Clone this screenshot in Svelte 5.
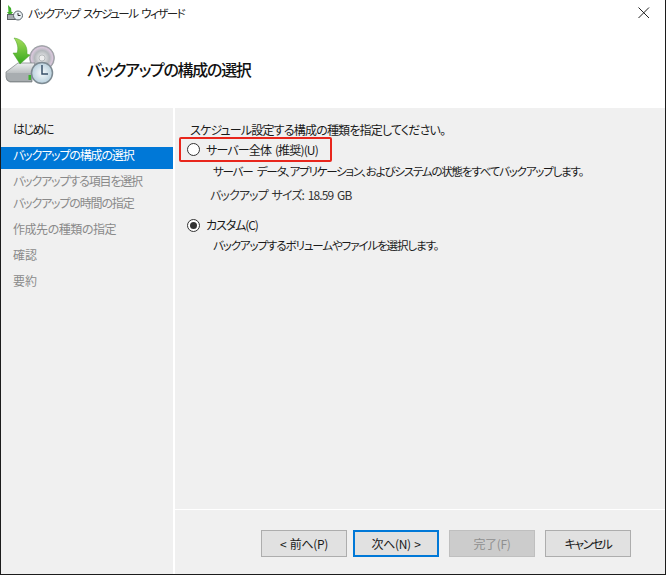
<script lang="ts">
  const steps = [
    { label: "はじめに", state: "done", track: "t-kana" },
    { label: "バックアップの構成の選択", state: "active", track: "t-mid" },
    { label: "バックアップする項目を選択", state: "todo", tight: true, track: "t-mid" },
    { label: "バックアップの時間の指定", state: "todo", track: "t-mid" },
    { label: "作成先の種類の指定", state: "todo", track: "t-low" },
    { label: "確認", state: "todo", track: "" },
    { label: "要約", state: "todo", track: "" }
  ];
</script>

<div class="window">
  <div class="titlebar">
    <svg class="small-icon" width="18" height="16" viewBox="0 0 18 16">
      <path d="M2 0 L5 3 L5.5 7 L7 7 L4 11 L1 7 L2.5 7 Z" fill="#3fae2a" />
      <rect x="1.5" y="9.5" width="8" height="5" fill="#a5abaf" stroke="#5b6165" stroke-width="1" />
      <circle cx="12" cy="10.5" r="4.5" fill="#e8eff3" stroke="#59636a" />
      <path d="M12 8 V10.5 H14.5" fill="none" stroke="#333" />
    </svg>
    <span class="title">バックアップ スケジュール ウィザード</span>
    <svg class="close" width="14" height="14" viewBox="0 0 14 14">
      <path d="M1.5 1.5 L12 12 M12 1.5 L1.5 12" stroke="#222" stroke-width="1" fill="none" />
    </svg>
  </div>

  <div class="header">
    <svg class="big-icon" width="56" height="50" viewBox="0 0 56 50">
      <defs>
        <linearGradient id="arrow" x1="0" y1="0" x2="0" y2="1">
          <stop offset="0" stop-color="#a5dc5a" />
          <stop offset="1" stop-color="#35a81e" />
        </linearGradient>
        <linearGradient id="drive" x1="0" y1="0" x2="0" y2="1">
          <stop offset="0" stop-color="#eef0f1" />
          <stop offset="1" stop-color="#8d9396" />
        </linearGradient>
        <radialGradient id="disc">
          <stop offset="0" stop-color="#f4f4f4" />
          <stop offset="0.6" stop-color="#b4b8bc" />
          <stop offset="0.85" stop-color="#d9c8dc" />
          <stop offset="1" stop-color="#8f9498" />
        </radialGradient>
        <radialGradient id="face">
          <stop offset="0" stop-color="#f6fafc" />
          <stop offset="1" stop-color="#b9d0dd" />
        </radialGradient>
      </defs>
      <circle cx="37" cy="23" r="12.5" fill="url(#disc)" stroke="#8b9094" stroke-width="0.5" />
      <circle cx="37" cy="23" r="3" fill="#eee" stroke="#8b9094" stroke-width="0.5" />
      <path d="M1 37 L13 28 L30 28 L27 38 L27 47 L5 47 Q1 46 1 42 Z" fill="url(#drive)" stroke="#777c80" stroke-width="0.7" />
      <path d="M2 38 L26 38 L26 46 L5 46 Q2 45 2 41 Z" fill="#a8adb0" />
      <rect x="23.5" y="40" width="2.5" height="5" fill="#3cb02a" />
      <path d="M9 3 C 17 4 23 10 22 19 L25 20 L15 29 L8 18 L12 18 C 14 13 12 7 9 3 Z" fill="url(#arrow)" stroke="#4aa32c" stroke-width="0.5" />
      <circle cx="37" cy="38" r="10.5" fill="url(#face)" stroke="#7d8a92" stroke-width="1.5" />
      <path d="M37 30 V39 H43" fill="none" stroke="#38506a" stroke-width="1.5" />
    </svg>
    <h1>バックアップの構成の選択</h1>
  </div>

  <div class="body">
    <nav class="sidebar">
      {#each steps as step}
        <div class="step {step.state} {step.track}" class:tight={step.tight}>{step.label}</div>
      {/each}
    </nav>

    <div class="main">
      <div class="content">
        <p class="intro">スケジュール設定する構成の種類を指定してください。</p>

        <div class="option highlighted">
          <span class="radio"></span>
          <span class="label-full">サーバー全体 (推奨)(U)</span>
        </div>
        <p class="desc">サーバー データ、アプリケーション、およびシステムの状態をすべてバックアップします。</p>
        <p class="size">バックアップ サイズ: 18.59 GB</p>

        <div class="option custom">
          <span class="radio checked"></span>
          <span class="label-custom">カスタム(C)</span>
        </div>
        <p class="desc second">バックアップするボリュームやファイルを選択します。</p>
      </div>

      <div class="footer">
        <button class="prev">&lt; 前へ(P)</button>
        <button class="next">次へ(N) &gt;</button>
        <button class="finish" disabled>完了(F)</button>
        <button class="cancel">キャンセル</button>
      </div>
    </div>
  </div>
</div>

<style>
  :global(body) {
    margin: 0;
    background: #fff;
  }

  .window {
    width: 666px;
    height: 575px;
    box-sizing: border-box;
    border: 1px solid #1c1c1c;
    border-top: none;
    display: flex;
    flex-direction: column;
    background: #fff;
    font-family: "Noto Sans CJK JP", "Noto Sans", sans-serif;
    font-feature-settings: "palt";
    font-size: 12px;
    line-height: 16px;
    color: #1a1a1a;
  }

  .titlebar {
    height: 30px;
    flex: none;
    display: flex;
    align-items: center;
    padding: 0 14px 4px 5px;
    box-sizing: border-box;
  }

  .small-icon {
    margin-right: 4px;
  }

  .title {
    font-size: 11.5px;
    letter-spacing: -1.5px;
    word-spacing: 2.5px;
    color: #222;
  }

  .close {
    margin-left: auto;
  }

  .header {
    height: 78px;
    flex: none;
    display: flex;
    align-items: center;
    padding: 0 0 0 4px;
    box-sizing: border-box;
  }

  .big-icon {
    margin-top: -18px;
  }

  h1 {
    margin: 0 0 0 26px;
    font-size: 16px;
    font-weight: 500;
    letter-spacing: -1.3px;
    color: #111;
  }

  .body {
    flex: 1;
    display: flex;
    min-height: 0;
    background: #f0f0f0;
  }

  .sidebar {
    width: 172px;
    flex: none;
    padding-top: 13px;
    box-sizing: border-box;
  }

  .step {
    height: 26px;
    padding: 0 12px;
    box-sizing: border-box;
    color: #8a8a8a;
    white-space: nowrap;
  }

  .t-kana {
    letter-spacing: -1.5px;
  }

  .t-mid {
    letter-spacing: -1.15px;
  }

  .t-low {
    letter-spacing: -0.45px;
  }

  .step.tight {
    height: 22px;
  }

  .step.done {
    color: #1a1a1a;
  }

  .step.active {
    height: 22px;
    margin-bottom: 4px;
    background: #0078d7;
    color: #fff;
  }

  .main {
    flex: 1;
    display: flex;
    flex-direction: column;
    border-left: 2px solid #fff;
    min-width: 0;
  }

  .content {
    flex: 1;
    padding: 14px 0 0 15px;
  }

  p {
    margin: 0;
    white-space: nowrap;
  }

  .intro {
    height: 15px;
    letter-spacing: -0.8px;
  }

  .option {
    display: flex;
    align-items: center;
    gap: 6px;
  }

  .label-full {
    letter-spacing: -0.85px;
    word-spacing: 2px;
  }

  .label-custom {
    letter-spacing: -1.1px;
  }

  .option .radio {
    width: 13px;
    height: 13px;
    box-sizing: border-box;
    border: 1px solid #333;
    border-radius: 50%;
    background: #fff;
    flex: none;
    display: flex;
    align-items: center;
    justify-content: center;
  }

  .radio.checked::after {
    content: "";
    width: 7px;
    height: 7px;
    border-radius: 50%;
    background: #333;
  }

  .highlighted {
    width: 153px;
    height: 25px;
    margin: 0 0 0 -11px;
    padding-left: 6px;
    box-sizing: border-box;
    border: 2px solid #e8261c;
    border-radius: 2px;
  }

  .desc {
    margin: 1px 0 0 23px;
    font-size: 11.5px;
    letter-spacing: -1.2px;
    word-spacing: 3px;
  }

  .size {
    margin: 8px 0 0 20px;
    letter-spacing: -0.9px;
    word-spacing: 2px;
    color: #333;
  }

  .custom {
    margin: 14px 0 0 -3px;
  }

  .desc.second {
    margin-top: 4px;
    letter-spacing: -1.1px;
  }

  .footer {
    height: 65px;
    flex: none;
    box-sizing: border-box;
    border-top: 1px solid #fff;
    padding: 20px 0 0 86px;
    display: flex;
    align-items: flex-start;
    gap: 10px;
  }

  button {
    width: 86px;
    height: 27px;
    padding: 0;
    box-sizing: border-box;
    border: 1px solid #adadad;
    border-radius: 0;
    background: #e1e1e1;
    color: #1a1a1a;
    font: inherit;
    font-feature-settings: inherit;
    letter-spacing: -0.3px;
    word-spacing: 1px;
  }

  .prev {
    margin-right: -4px;
  }

  .next {
    border: 2px solid #0078d7;
  }

  .finish {
    background: #cccccc;
    border-color: #bfbfbf;
    color: #8f8f8f;
  }

  .cancel {
    letter-spacing: -1.5px;
  }
</style>
